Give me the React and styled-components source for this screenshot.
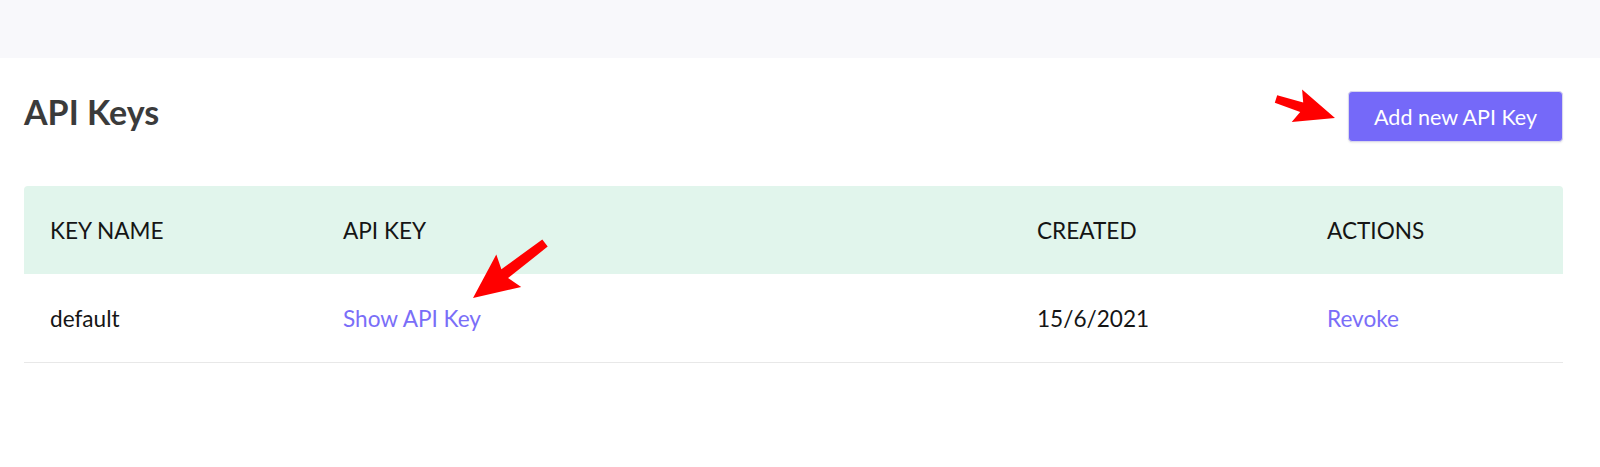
import React from 'react';
import styled, { createGlobalStyle } from 'styled-components';

const GlobalStyle = createGlobalStyle`
  body {
    margin: 0;
    background: #ffffff;
    font-family: Lato, "Open Sans", sans-serif;
  }
`;

const Page = styled.div`
  position: relative;
  width: 1600px;
  height: 467px;
  overflow: hidden;
  background: #ffffff;
`;

const TopBar = styled.div`
  height: 58px;
  background: #f8f8fb;
`;

const Content = styled.div`
  padding: 33px 37px 0 24px;
`;

const Header = styled.div`
  display: flex;
  justify-content: space-between;
  align-items: center;
  height: 51px;
`;

const Title = styled.h1`
  margin: 0 0 9px 0;
  font-size: 34px;
  font-weight: 700;
  color: #3b3b3b;
  line-height: 1;
`;

const AddButton = styled.button`
  height: 51px;
  padding: 0 25px;
  font-family: Lato, sans-serif;
  font-size: 21.5px;
  color: #ffffff;
  background: #7569f9;
  border: 1px solid #d9d7ee;
  border-radius: 4px;
  box-shadow: 0 1px 2px rgba(0, 0, 0, 0.08);
  cursor: pointer;
`;

const Table = styled.div`
  margin-top: 44px;
`;

const Row = styled.div`
  display: grid;
  grid-template-columns: 293px 694px 290px 1fr;
  align-items: center;
  height: 88px;
  background: ${p => (p.$head ? '#e1f5ec' : '#ffffff')};
  border-radius: ${p => (p.$head ? '4px 4px 0 0' : '0')};
  border-bottom: ${p => (p.$head ? 'none' : '1px solid #e8e8e8')};
`;

const Cell = styled.div`
  padding-left: 26px;
  font-size: 22.6px;
  color: ${p => (p.$link ? '#7a6ef8' : '#151515')};
  cursor: ${p => (p.$link ? 'pointer' : 'default')};
`;

const Overlay = styled.svg`
  position: absolute;
  left: 0;
  top: 0;
  pointer-events: none;
`;

function arrowPoints(tail, tip, headLen, headHalf, tailHalf, neckHalf) {
  const dx = tip[0] - tail[0];
  const dy = tip[1] - tail[1];
  const len = Math.hypot(dx, dy);
  const d = [dx / len, dy / len];
  const n = [-d[1], d[0]];
  const at = (a, p) => [tail[0] + d[0] * a + n[0] * p, tail[1] + d[1] * a + n[1] * p];
  const base = len - headLen;
  const pts = [
    at(0, -tailHalf),
    at(base + 5, -neckHalf),
    at(base, -headHalf),
    at(len, 0),
    at(base, headHalf),
    at(base + 5, neckHalf),
    at(0, tailHalf),
  ];
  return pts.map(p => p.map(v => v.toFixed(1)).join(',')).join(' ');
}

const columns = ['KEY NAME', 'API KEY', 'CREATED', 'ACTIONS'];

function App() {
  return (
    <Page>
      <GlobalStyle />
      <TopBar />
      <Content>
        <Header>
          <Title>API Keys</Title>
          <AddButton>Add new API Key</AddButton>
        </Header>
        <Table>
          <Row $head>
            {columns.map(c => (
              <Cell key={c}>{c}</Cell>
            ))}
          </Row>
          <Row>
            <Cell>default</Cell>
            <Cell $link>Show API Key</Cell>
            <Cell>15/6/2021</Cell>
            <Cell $link>Revoke</Cell>
          </Row>
        </Table>
      </Content>
      <Overlay width="1600" height="467" viewBox="0 0 1600 467">
        <polygon points={arrowPoints([1276, 99], [1335, 118], 40, 17, 4, 5)} fill="#ff0000" />
        <polygon points={arrowPoints([545, 243], [473, 298], 45, 20.5, 4.5, 5.5)} fill="#ff0000" />
      </Overlay>
    </Page>
  );
}

export default App;
